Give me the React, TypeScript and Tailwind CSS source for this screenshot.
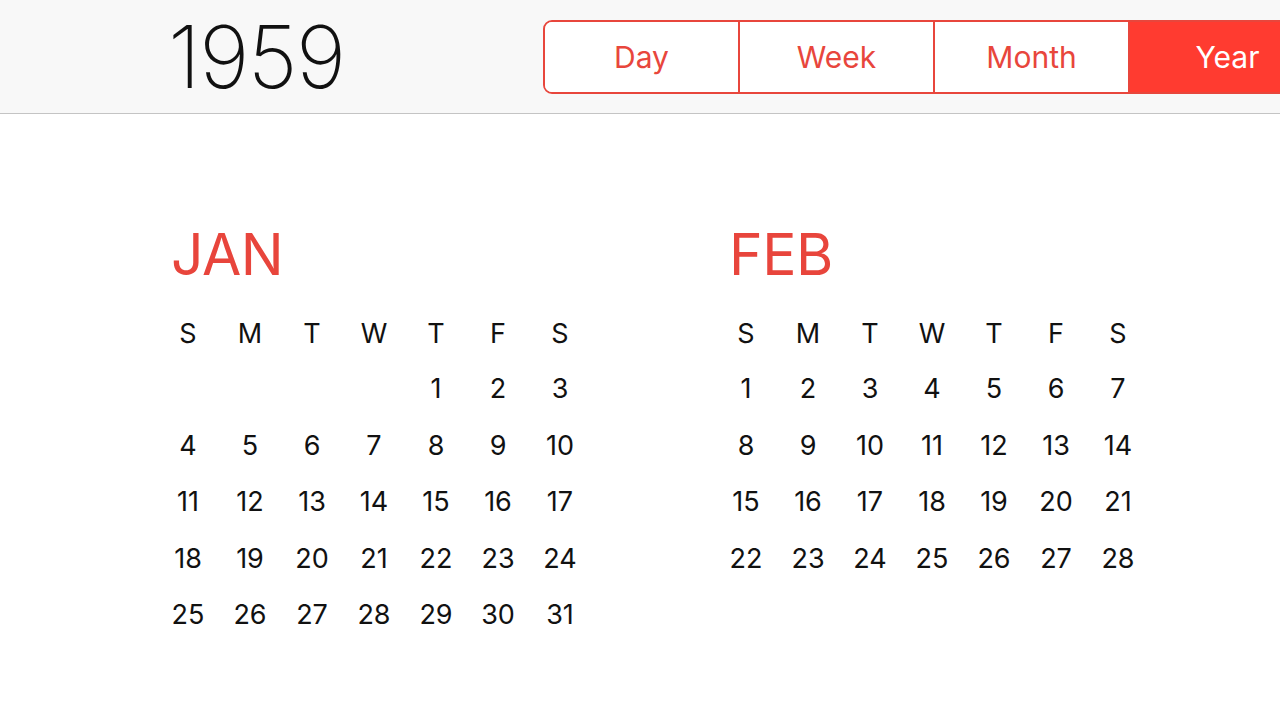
const views = ["Day", "Week", "Month", "Year"];
const weekdays = ["S", "M", "T", "W", "T", "F", "S"];

const months = [
  { name: "JAN", offset: 4, days: 31 },
  { name: "FEB", offset: 0, days: 28 },
];

const MonthBlock = ({ name, offset, days }: { name: string; offset: number; days: number }) => {
  const cells: (number | null)[] = [
    ...Array.from({ length: offset }, () => null),
    ...Array.from({ length: days }, (_, i) => i + 1),
  ];
  return (
    <div className="w-[434px] shrink-0">
      <div className="pl-[14px] text-[57px] leading-[62px] text-[#e8453c] tracking-[-0.5px]">{name}</div>
      <div className="mt-[33px] grid grid-cols-7">
        {weekdays.map((d, i) => (
          <div key={i} className="h-[55px] text-center text-[27px] leading-[30px] text-[#111]">
            {d}
          </div>
        ))}
        {cells.map((d, i) => (
          <div key={i} className="h-[56.5px] text-center text-[27px] leading-[30px] text-[#111]">
            {d ?? ""}
          </div>
        ))}
      </div>
    </div>
  );
};

export default function App() {
  return (
    <div
      className="w-[1280px] h-[720px] overflow-hidden bg-white"
      style={{ fontFamily: "Inter, 'Noto Sans', sans-serif" }}
    >
      <header className="flex h-[114px] items-start border-b border-[#c4c4c4] bg-[#f8f8f8]">
        <div className="ml-[168px] mt-[14px] w-[375px] shrink-0 text-[86px] leading-[86px] font-extralight tracking-[-1.5px] text-[#111]">
          1959
        </div>
        <div className="mt-[20px] flex h-[74px] shrink-0 overflow-hidden rounded-[9px] border-2 border-[#e8463c]">
          {views.map((v, i) => (
            <div
              key={v}
              className={
                v === "Year"
                  ? "flex w-[195px] items-center justify-center bg-[#ff3b30] text-[30px] text-white"
                  : "flex w-[195px] items-center justify-center bg-white text-[30px] text-[#e8463c] " +
                    (i < 3 ? "border-r-2 border-[#e8463c]" : "")
              }
            >
              {v}
            </div>
          ))}
        </div>
      </header>
      <main className="ml-[157px] mt-[110px] flex gap-[124px]">
        {months.map((m) => (
          <MonthBlock key={m.name} {...m} />
        ))}
      </main>
    </div>
  );
}
